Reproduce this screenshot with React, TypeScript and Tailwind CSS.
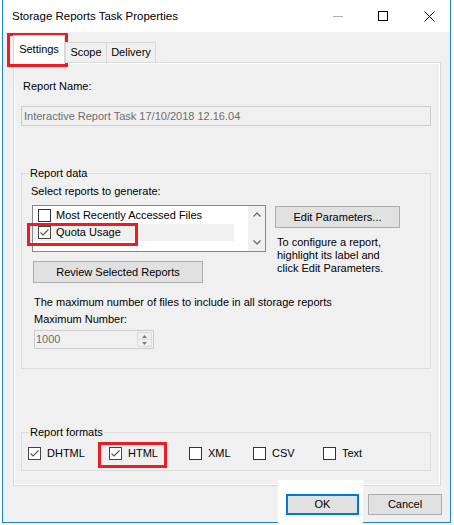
import React from 'react';

const Check = ({ checked }: { checked: boolean }) => (
  <span
    className={
      checked
        ? 'flex h-[13px] w-[13px] shrink-0 items-center justify-center border border-[#444] bg-white'
        : 'flex h-[13px] w-[13px] shrink-0 items-center justify-center border border-[#333] bg-white'
    }
  >
    {checked && (
      <svg width="11" height="11" viewBox="0 0 11 11">
        <path d="M1.5 5.5 L4 8 L9.5 2.5" fill="none" stroke="#555" strokeWidth="1.1" />
      </svg>
    )}
  </span>
);

const Btn = ({ children, className }: { children: React.ReactNode; className: string }) => (
  <div className={'flex items-center justify-center border border-[#adadad] bg-[#e1e1e1] text-black ' + className}>
    {children}
  </div>
);

const Chevron = ({ up }: { up: boolean }) => (
  <svg width="8" height="5" viewBox="0 0 8 5">
    <path d={up ? 'M0.5 4.5 L4 1 L7.5 4.5' : 'M0.5 0.5 L4 4 L7.5 0.5'} fill="none" stroke="#606060" strokeWidth="1.2" />
  </svg>
);

const Format = ({ label, checked, w }: { label: string; checked: boolean; w: string }) => (
  <div className={'flex items-center ' + w}>
    <Check checked={checked} />
    <span className="ml-[6px]">{label}</span>
  </div>
);

export default function App() {
  return (
    <div className="relative h-[525px] w-[454px] overflow-hidden bg-white font-['Liberation_Sans',Arial,sans-serif] text-[11px] leading-[15px] text-black">
      <div className="ml-[2px] flex h-[523px] w-[449px] flex-col border-x border-b border-[#1883d7] bg-[#f0f0f0]">
        {/* title bar */}
        <div className="flex h-[32px] shrink-0 items-center bg-white">
          <div className="pl-[9px] text-[11.5px]">Storage Reports Task Properties</div>
          <div className="ml-auto mr-[15px] flex items-center">
            <span className="block h-px w-[10px] bg-[#b0b0b0]" />
            <span className="ml-[35px] block h-[10px] w-[10px] border border-black" />
            <svg className="ml-[36px]" width="11" height="11" viewBox="0 0 11 11">
              <path d="M0.5 0.5 L10.5 10.5 M10.5 0.5 L0.5 10.5" stroke="#000" strokeWidth="1" />
            </svg>
          </div>
        </div>

        {/* body */}
        <div className="flex flex-1 flex-col pl-[10px] pt-[3px]">
          {/* tabs */}
          <div className="relative z-10 -mb-px flex h-[28px] items-end">
            <div className="flex h-[28px] w-[52px] items-center justify-center border-x border-t border-[#d9d9d9] bg-white pb-px">
              Settings
            </div>
            <div className="flex h-[21px] w-[42px] items-center justify-center border-x border-y border-[#d9d9d9] bg-[#f0f0f0]">
              Scope
            </div>
            <div className="flex h-[21px] w-[49px] items-center justify-center border-y border-r border-[#d9d9d9] bg-[#f0f0f0]">
              Delivery
            </div>
          </div>

          {/* panel */}
          <div className="h-[424px] w-[428px] border border-[#d9d9d9]">
            <div className="flex h-full flex-col border border-white bg-[#f0f0f0]">
              <div className="ml-[8px] mt-[15px]">Report Name:</div>
              <div className="ml-[6px] mt-[12px] flex h-[20px] w-[410px] items-center border border-[#cccccc] bg-[#f0f0f0] pl-[2px] text-[#6d6d6d]">
                Interactive Report Task 17/10/2018 12.16.04
              </div>

              {/* Report data group */}
              <fieldset className="ml-[6px] mt-[40px] w-[410px] border border-[#dcdcdc] pb-[19px]">
                <legend className="ml-[7px] px-[1px]">Report data</legend>
                <div className="ml-[9px] mt-[3px]">Select reports to generate:</div>
                <div className="mt-[6px] flex items-start">
                  <div className="flex flex-col">
                    <div className="ml-[10px] flex h-[47px] w-[234px] border border-[#828790] bg-white">
                      <div className="flex flex-1 flex-col pt-px">
                        <div className="flex h-[17px] items-center">
                          <span className="ml-[5px]"><Check checked={false} /></span>
                          <span className="ml-[5px]">Most Recently Accessed Files</span>
                        </div>
                        <div className="flex h-[17px] w-[201px] items-center bg-[#f0f0f0]">
                          <span className="ml-[5px]"><Check checked={true} /></span>
                          <span className="ml-[5px]">Quota Usage</span>
                        </div>
                      </div>
                      <div className="flex w-[17px] flex-col justify-between bg-[#f0f0f0] py-[6px]">
                        <div className="flex justify-center"><Chevron up={true} /></div>
                        <div className="flex justify-center"><Chevron up={false} /></div>
                      </div>
                    </div>
                    <Btn className="ml-[11px] mt-[9px] h-[22px] w-[170px]">Review Selected Reports</Btn>
                  </div>
                  <div className="ml-[9px] flex flex-col">
                    <Btn className="mt-px h-[22px] w-[125px]">Edit Parameters...</Btn>
                    <div className="ml-[2px] mt-[8px] leading-[13px]">
                      <div>To configure a report,</div>
                      <div>highlight its label and</div>
                      <div>click Edit Parameters.</div>
                    </div>
                  </div>
                </div>
                <div className="ml-[12px] mt-[12px]">The maximum number of files to include in all storage reports</div>
                <div className="ml-[12px] mt-[2px]">Maximum Number:</div>
                <div className="ml-[12px] mt-[3px] flex h-[19px] w-[120px] items-center border border-[#cccccc] bg-[#f0f0f0]">
                  <span className="flex-1 pl-[1px] text-[#6d6d6d]">1000</span>
                  <div className="mr-px flex h-[15px] w-[15px] flex-col border border-[#dcdcdc] bg-[#f0f0f0]">
                    <div className="flex flex-1 items-center justify-center border-b border-[#dcdcdc]">
                      <svg width="5" height="3" viewBox="0 0 5 3"><path d="M0 3 L2.5 0 L5 3Z" fill="#7a7a7a" /></svg>
                    </div>
                    <div className="flex flex-1 items-center justify-center">
                      <svg width="5" height="3" viewBox="0 0 5 3"><path d="M0 0 L2.5 3 L5 0Z" fill="#7a7a7a" /></svg>
                    </div>
                  </div>
                </div>
              </fieldset>

              {/* Report formats group */}
              <fieldset className="ml-[6px] mt-[56px] w-[410px] border border-[#dcdcdc] pb-[9px]">
                <legend className="ml-[7px] px-[1px]">Report formats</legend>
                <div className="ml-[6px] mt-[6px] flex h-[15px] items-center">
                  <Format label="DHTML" checked={true} w="w-[81px]" />
                  <Format label="HTML" checked={true} w="w-[80px]" />
                  <Format label="XML" checked={false} w="w-[64px]" />
                  <Format label="CSV" checked={false} w="w-[70px]" />
                  <Format label="Text" checked={false} w="w-[60px]" />
                </div>
              </fieldset>
            </div>
          </div>

          {/* footer */}
          <div className="relative z-10 ml-[273px] mt-[8px] flex">
            <div className="flex h-[21px] w-[73px] items-center justify-center border-2 border-[#0078d7] bg-[#e1e1e1]">OK</div>
            <Btn className="ml-[9px] h-[21px] w-[74px]">Cancel</Btn>
          </div>
        </div>
      </div>

      {/* white patch behind OK */}
      <div className="absolute left-[278px] top-[480px] h-[45px] w-[85px] bg-white" />

      {/* red annotation boxes */}
      <div className="absolute left-[7px] top-[33px] h-[34px] w-[61px] border-[3px] border-[#ec1c24]" />
      <div className="absolute left-[27px] top-[223px] h-[23px] w-[111px] border-[3px] border-[#ec1c24]" />
      <div className="absolute left-[98px] top-[442px] h-[26px] w-[69px] border-[3px] border-[#ec1c24]" />
    </div>
  );
}
